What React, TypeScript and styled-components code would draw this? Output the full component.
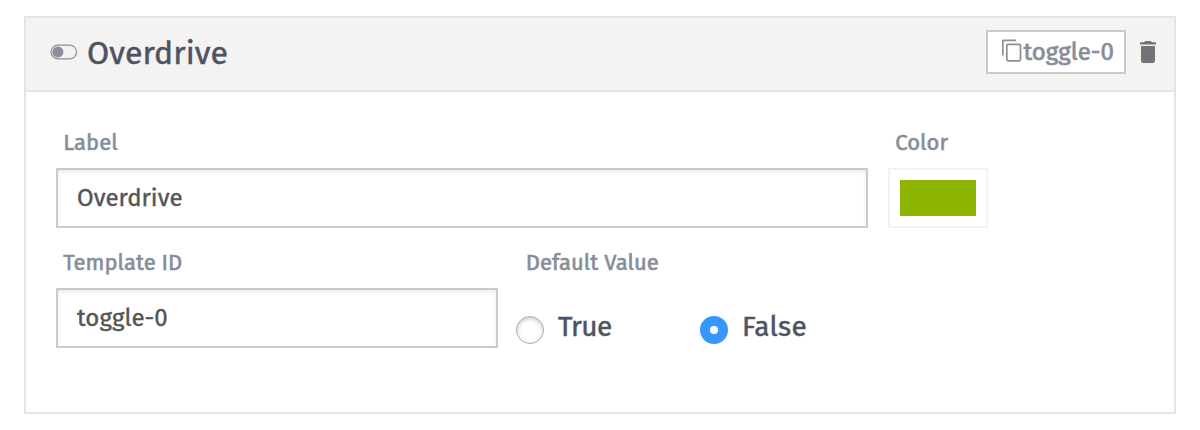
import React from 'react';
import styled, { createGlobalStyle, css } from 'styled-components';

const GlobalStyle = createGlobalStyle`
  *, *::before, *::after { box-sizing: border-box; }
  body {
    margin: 0;
    background: #fff;
    font-family: 'Fira Sans', 'Noto Sans', sans-serif;
    font-weight: 400;
    color: #4d5363;
  }
`;

const Page = styled.main`
  padding: 16px 24px;
`;

const Card = styled.section`
  height: 398px;
  border: 2px solid #e4e5e6;
`;

const Header = styled.header`
  display: flex;
  align-items: center;
  height: 74px;
  padding: 0 18px 0 24px;
  background: #f4f3f1;
  border-bottom: 2px solid #e4e5e6;
`;

const Title = styled.h1`
  flex: 1;
  margin: 0 0 0 9px;
  padding-bottom: 2px;
  font-size: 32px;
  line-height: 36px;
  font-weight: 400;
  letter-spacing: 0.1px;
  -webkit-text-stroke: 0.5px;
`;

const ToggleIcon = styled.svg`
  width: 28px;
  height: 16px;
  margin-bottom: 4px;
`;

const IdChip = styled.button`
  display: flex;
  align-items: center;
  width: 140px;
  height: 44px;
  margin: 0 14px 4px 0;
  padding: 0 0 0 14px;
  border: 2px solid #cbcbcb;
  background: #fff;
  color: #888d98;
  font: 400 24px/28px 'Fira Sans', 'Noto Sans', sans-serif;
  white-space: nowrap;
  -webkit-text-stroke: 0.7px;
`;

const CopyIcon = styled.svg`
  flex: none;
  width: 20px;
  height: 24px;
  margin: 0 1.5px 3px 0;
`;

const TrashIcon = styled.svg`
  width: 16px;
  height: 22px;
  margin-bottom: 4px;
`;

const Form = styled.div`
  padding: 38px 30px;
`;

const Row = styled.div<{ $gap: number }>`
  display: flex;
  gap: ${(p) => p.$gap}px;
  height: 120px;
`;

const Field = styled.div<{ $width?: number }>`
  width: ${(p) => (p.$width ? `${p.$width}px` : 'auto')};
`;

const FieldLabel = styled.label<{ $indent?: number }>`
  display: block;
  margin-bottom: 12px;
  padding-left: ${(p) => p.$indent ?? 7.3}px;
  color: #888d98;
  font-size: 22px;
  font-weight: 400;
  line-height: 26px;
  letter-spacing: 0.05px;
  white-space: nowrap;
  -webkit-text-stroke: 0.6px;
`;

const TextInput = styled.input`
  display: block;
  width: 100%;
  height: 60px;
  padding: 0 19px;
  border: 2px solid #cbcbcb;
  border-radius: 0;
  outline: none;
  background: #fff;
  box-shadow: inset 0 2px 4px rgba(0, 0, 0, 0.08);
  color: #555;
  font: 400 24px/28px 'Fira Sans', 'Noto Sans', sans-serif;
  letter-spacing: 0.05px;
  -webkit-text-stroke: 0.4px;
`;

const Swatch = styled.div`
  width: 100px;
  height: 60px;
  padding: 10px;
  border: 2px solid #f3f3f3;
`;

const SwatchFill = styled.div`
  height: 100%;
  background: #8cb400;
`;

const RadioGroup = styled.div`
  display: flex;
  padding-top: 28px;
`;

const Option = styled.label<{ $tracking: number }>`
  display: flex;
  width: 184px;
  font-size: 28px;
  line-height: 21px;
  letter-spacing: ${(p) => p.$tracking}px;
  -webkit-text-stroke: 0.5px;
`;

const Radio = styled.span<{ $checked?: boolean }>`
  width: 28px;
  height: 28px;
  margin-right: 14px;
  border-radius: 50%;
  background: #fff;
  border: 1px solid #aaa;
  box-shadow: inset 0 2px 4px rgba(0, 0, 0, 0.2);
  ${(p) =>
    p.$checked &&
    css`
      border: 10px solid #3797fc;
      box-shadow: none;
    `}
`;

export default function App() {
  return (
    <>
      <GlobalStyle />
      <Page>
        <Card>
          <Header>
            <ToggleIcon viewBox="0 0 28 16">
              <rect x="1.1" y="1.2" width="25.4" height="13.6" rx="6.8" fill="none" stroke="#8a8f99" strokeWidth="1.2" />
              <circle cx="7.9" cy="8" r="5.5" fill="#8a8f99" />
            </ToggleIcon>
            <Title>Overdrive</Title>
            <IdChip>
              <CopyIcon viewBox="0 0 20 24" fill="none" stroke="#8a8f99" strokeWidth="1.7">
                <path d="M.8 16.4V2.3Q.8 1.3 1.8 1.3H14" />
                <rect x="4.8" y="5.3" width="13.7" height="16.5" rx="1.2" />
              </CopyIcon>
              toggle-0
            </IdChip>
            <TrashIcon viewBox="0 0 16 22" fill="#717376">
              <path d="M0 1.3H4L5.2 0H10.8L12 1.3H16V3.6H0Z" />
              <path d="M1 5H15V19.7Q15 22 12.7 22H3.3Q1 22 1 19.7Z" />
            </TrashIcon>
          </Header>
          <Form>
            <Row $gap={20}>
              <Field $width={812}>
                <FieldLabel>Label</FieldLabel>
                <TextInput defaultValue="Overdrive" />
              </Field>
              <Field>
                <FieldLabel>Color</FieldLabel>
                <Swatch>
                  <SwatchFill />
                </Swatch>
              </Field>
            </Row>
            <Row $gap={18}>
              <Field $width={442}>
                <FieldLabel>Template ID</FieldLabel>
                <TextInput defaultValue="toggle-0" />
              </Field>
              <Field>
                <FieldLabel $indent={9.8}>Default Value</FieldLabel>
                <RadioGroup>
                  <Option $tracking={-0.6}>
                    <Radio />
                    True
                  </Option>
                  <Option $tracking={0.3}>
                    <Radio $checked />
                    False
                  </Option>
                </RadioGroup>
              </Field>
            </Row>
          </Form>
        </Card>
      </Page>
    </>
  );
}
